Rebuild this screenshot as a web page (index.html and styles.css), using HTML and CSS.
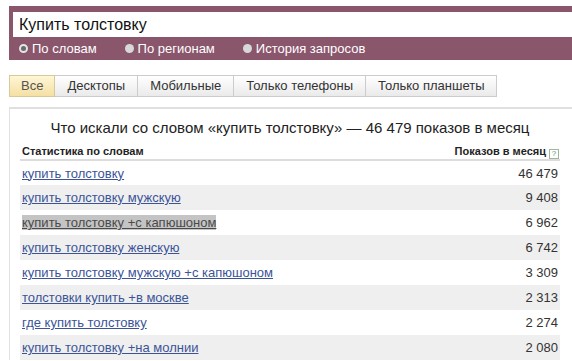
FILE: index.html
```html
<!DOCTYPE html>
<html lang="ru">
<head>
    <meta charset="UTF-8">
    <title>Подбор слов</title>
    <link rel="stylesheet" href="styles.css">
</head>
<body>
    <div class="search-bar">
        <div class="search-input">Купить толстовку</div>
        <div class="search-modes">
            <label class="mode"><span class="radio checked"></span>По словам</label>
            <label class="mode"><span class="radio"></span>По регионам</label>
            <label class="mode"><span class="radio"></span>История запросов</label>
        </div>
    </div>

    <div class="tabs">
        <div class="tab active">Все</div>
        <div class="tab">Десктопы</div>
        <div class="tab">Мобильные</div>
        <div class="tab">Только телефоны</div>
        <div class="tab">Только планшеты</div>
    </div>

    <div class="panel">
        <h2 class="panel-title">Что искали со словом «купить толстовку» — 46 479 показов в месяц</h2>
        <table class="stats">
            <thead>
                <tr>
                    <th class="col-word">Статистика по словам</th>
                    <th class="col-count">Показов в месяц <span class="help">?</span></th>
                </tr>
            </thead>
            <tbody>
                <tr><td><a href="#">купить толстовку</a></td><td class="num">46 479</td></tr>
                <tr class="odd"><td><a href="#">купить толстовку мужскую</a></td><td class="num">9 408</td></tr>
                <tr><td><a href="#" class="selected">купить толстовку +с капюшоном</a></td><td class="num">6 962</td></tr>
                <tr class="odd"><td><a href="#">купить толстовку женскую</a></td><td class="num">6 742</td></tr>
                <tr><td><a href="#">купить толстовку мужскую +с капюшоном</a></td><td class="num">3 309</td></tr>
                <tr class="odd"><td><a href="#">толстовки купить +в москве</a></td><td class="num">2 313</td></tr>
                <tr><td><a href="#">где купить толстовку</a></td><td class="num">2 274</td></tr>
                <tr class="odd"><td><a href="#">купить толстовку +на молнии</a></td><td class="num">2 080</td></tr>
            </tbody>
        </table>
    </div>
</body>
</html>
```

FILE: styles.css
```css
* {
    margin: 0;
    padding: 0;
    box-sizing: border-box;
}

body {
    font-family: 'Liberation Sans', Arial, sans-serif;
    background-color: #FFFFFF;
    color: #333333;
    padding: 6px 0 0 9px;
    overflow: hidden;
}

.search-bar {
    background-color: #8A566C;
    padding: 6px 0 0 4px;
}

.search-input {
    background-color: #FFFFFF;
    height: 25px;
    font-size: 16px;
    line-height: 25px;
    padding-left: 6px;
    color: #111111;
}

.search-modes {
    display: flex;
    height: 23px;
    align-items: center;
    padding-left: 6px;
}

.mode {
    display: flex;
    align-items: center;
    font-size: 13px;
    color: #FFFFFF;
    margin-right: 28px;
}

.radio {
    width: 9px;
    height: 9px;
    border-radius: 50%;
    background-color: #D8D8D8;
    margin-right: 4px;
}

.radio.checked {
    background-color: #6A6A6A;
    border: 2px solid #E4E4E4;
}

.tabs {
    display: flex;
    margin-top: 15px;
}

.tab {
    height: 22px;
    line-height: 20px;
    padding: 0 12px;
    font-size: 13px;
    color: #333333;
    border: 1px solid #CCCCCC;
    border-left: none;
    background: linear-gradient(#FFFFFF, #EAEAEA);
}

.tab:first-child {
    border-left: 1px solid #CCCCCC;
    padding: 0 11px;
}

.tab.active {
    background: linear-gradient(#FFF6D6, #F5E0A4);
    color: #555555;
    border-color: #D9C89A;
}

.panel {
    margin-top: 10px;
    border-left: 1px solid #E2E2E2;
    border-top: 2px solid #E0E0E0;
    padding: 10px 12px 0 10px;
}

.panel-title {
    font-size: 15px;
    font-weight: normal;
    text-align: center;
    color: #222222;
    margin-bottom: 9px;
}

.stats {
    width: 540px;
    border-collapse: collapse;
}

.stats th {
    font-size: 11px;
    font-weight: bold;
    color: #222222;
    height: 14px;
    line-height: 13px;
    vertical-align: top;
    border-bottom: 2px solid #DDDDDD;
}

.col-word {
    text-align: left;
    padding-left: 2px;
}

.col-count {
    text-align: right;
    padding-right: 1px;
}

.help {
    display: inline-block;
    width: 10px;
    height: 10px;
    border: 1px solid #9FB59F;
    font-size: 8px;
    line-height: 8px;
    text-align: center;
    color: #5E9A5E;
    font-weight: normal;
    vertical-align: -1px;
}

.stats td {
    height: 25px;
    font-size: 13px;
    padding: 0 2px;
}

.stats tr.odd td {
    background-color: #EFEFEF;
}

.stats a {
    color: #3B5498;
}

.stats a.selected {
    background-color: #C4C4C4;
    color: #4A4A4A;
}

.num {
    text-align: right;
    color: #333333;
}
```
